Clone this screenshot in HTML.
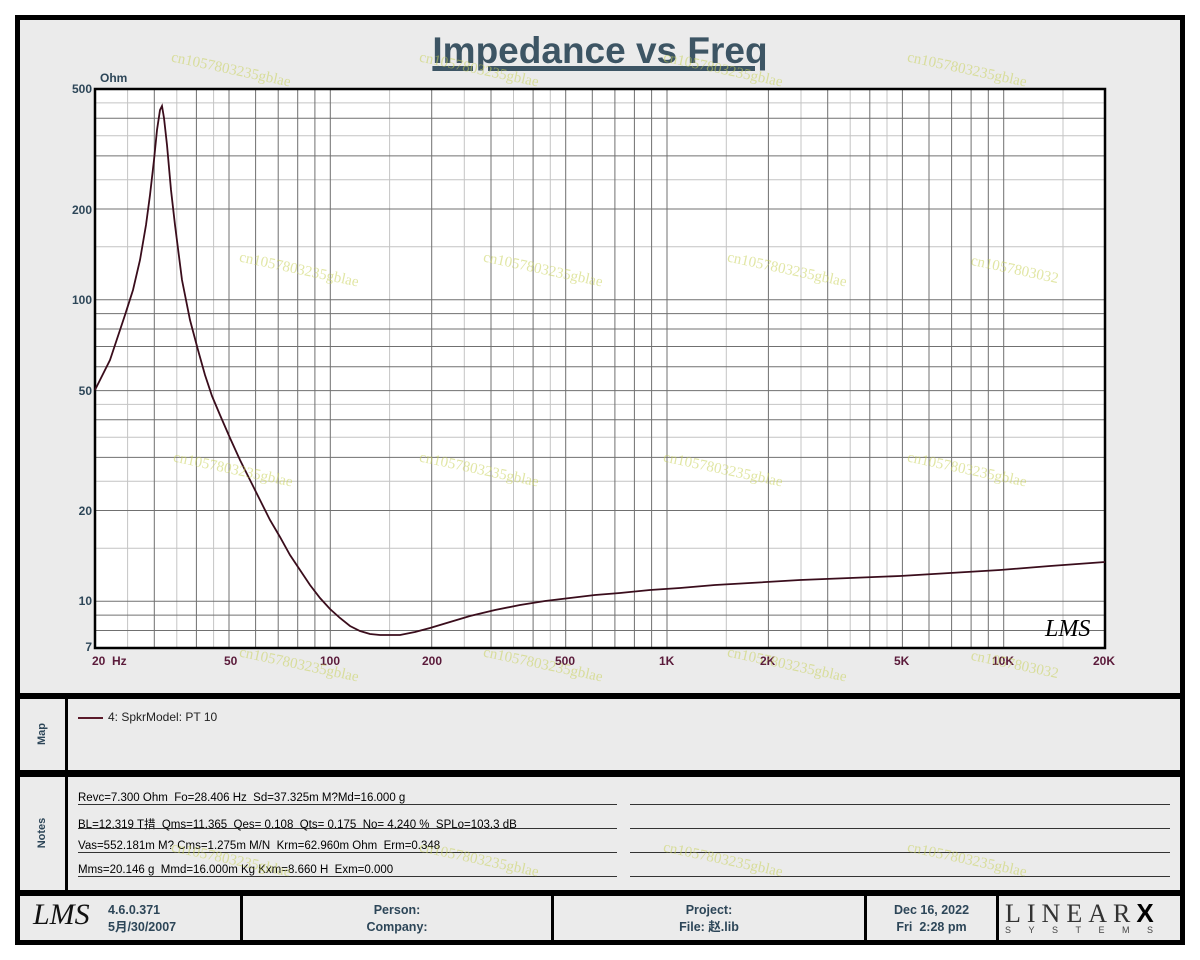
<!DOCTYPE html>
<html><head><meta charset="utf-8">
<style>
*{margin:0;padding:0;box-sizing:border-box}
body{width:1200px;height:960px;background:#fff;position:relative;overflow:hidden;font-family:"Liberation Sans","Noto Sans CJK SC",sans-serif}
.abs{position:absolute}
.frame{left:15px;top:15px;width:1170px;height:930px;background:#000}
.pnl{background:#ebebeb;position:absolute}
.title{left:0;width:1200px;top:30px;text-align:center;font-weight:bold;font-size:37px;color:#3d5564;text-decoration:underline;text-decoration-thickness:5px;text-underline-offset:3px}
.yl{font-weight:bold;font-size:12px;color:#2d4658;text-align:right;width:40px}
.xl{font-weight:bold;font-size:12px;color:#5a1a3a}
.vlab{font-weight:bold;font-size:11px;color:#2d4658;transform:rotate(-90deg);transform-origin:center;width:60px;text-align:center}
.note{font-size:11.5px;color:#000;left:78px}
.uline{height:1px;background:#333}
.ft{font-size:12.5px;font-weight:bold;color:#2d4658;text-align:center;line-height:17px}
.wm{font-family:"Liberation Serif",serif;font-size:15px;color:rgba(200,210,90,.55);transform:rotate(12deg);white-space:nowrap}
</style></head><body>
<div class="abs frame"></div>
<div class="pnl" style="left:20px;top:20px;width:1160px;height:673px"></div>
<div class="pnl" style="left:20px;top:699px;width:45px;height:71px"></div>
<div class="pnl" style="left:68px;top:699px;width:1112px;height:71px"></div>
<div class="pnl" style="left:20px;top:777px;width:45px;height:113px"></div>
<div class="pnl" style="left:68px;top:777px;width:1112px;height:113px"></div>
<div class="pnl" style="left:20px;top:896px;width:220px;height:44px"></div>
<div class="pnl" style="left:243px;top:896px;width:308px;height:44px"></div>
<div class="pnl" style="left:554px;top:896px;width:310px;height:44px"></div>
<div class="pnl" style="left:867px;top:896px;width:129px;height:44px"></div>
<div class="pnl" style="left:999px;top:896px;width:181px;height:44px"></div>

<div class="abs title">Impedance vs Freq</div>
<div class="abs" style="left:100px;top:71px;font-weight:bold;font-size:12px;color:#2d4658">Ohm</div>

<svg class="abs" style="left:0;top:0" width="1200" height="700" id="plot">
<rect x="95" y="89" width="1010" height="559" fill="#fff"/>
<g id="grid2" stroke="#c4c4c4" stroke-width="1"></g>
<g id="grid" stroke="#707070" stroke-width="1"></g>
<rect x="95" y="89" width="1010" height="559" fill="none" stroke="#000" stroke-width="2.5"/>
<polyline fill="none" stroke="#3a0d1c" stroke-width="1.8" points="95,390 110,360 125,315 133,290 140,260 146,225 150,195 154,160 157,130 160,110 162,106 164,118 167,145 171,190 175,225 182,280 190,320 198,350 205,375 212,396 220,415 230,438 240,460 250,480 260,500 270,520 280,537 290,555 300,570 310,585 320,598 330,609 340,618 350,626 360,631 370,634 380,635 390,635 400,635 415,632 430,628 450,622 470,616 495,610 520,605 545,601 570,598 595,595 620,593 650,590 680,588 715,585 750,583 800,580 850,578 900,576 950,573 1000,570 1050,566 1105,562"/>
<text x="1045" y="636" font-family="Liberation Serif,serif" font-style="italic" font-size="24" fill="#000">LMS</text>
</svg>
<script>
(function(){
var g=document.getElementById('grid'),g2=document.getElementById('grid2'),s='',s2='';
function X(f){return 95+Math.log10(f/20)*336.7}
function Y(v){return 648-Math.log10(v/7)*301.5}
for(var d=10;d<=10000;d*=10){
 for(var m=1;m<10;m++){var f=d*m;if(f>20&&f<20000){var x=X(f).toFixed(1);s+='<line x1="'+x+'" y1="89" x2="'+x+'" y2="648"/>';}}
 [1.5,2.5,3.5,4.5].forEach(function(m){var f=d*m;if(f>20&&f<20000){var x=X(f).toFixed(1);s2+='<line x1="'+x+'" y1="89" x2="'+x+'" y2="648"/>';}});
}
[8,9,10,20,30,40,50,60,70,80,90,100,200,300,400].forEach(function(v){var y=Y(v).toFixed(1);s+='<line x1="95" y1="'+y+'" x2="1105" y2="'+y+'"/>';});
[15,25,35,45,150,250,350,450].forEach(function(v){var y=Y(v).toFixed(1);s2+='<line x1="95" y1="'+y+'" x2="1105" y2="'+y+'"/>';});
g.innerHTML=s;g2.innerHTML=s2;
})();
</script>

<div class="abs yl" style="left:52px;top:82px">500</div>
<div class="abs yl" style="left:52px;top:203px">200</div>
<div class="abs yl" style="left:52px;top:293px">100</div>
<div class="abs yl" style="left:52px;top:384px">50</div>
<div class="abs yl" style="left:52px;top:504px">20</div>
<div class="abs yl" style="left:52px;top:594px">10</div>
<div class="abs yl" style="left:52px;top:640px">7</div>

<div class="abs xl" style="left:92px;top:654px">20&nbsp;&nbsp;Hz</div>
<div class="abs xl" style="left:224px;top:654px">50</div>
<div class="abs xl" style="left:320px;top:654px">100</div>
<div class="abs xl" style="left:422px;top:654px">200</div>
<div class="abs xl" style="left:555px;top:654px">500</div>
<div class="abs xl" style="left:659px;top:654px">1K</div>
<div class="abs xl" style="left:760px;top:654px">2K</div>
<div class="abs xl" style="left:894px;top:654px">5K</div>
<div class="abs xl" style="left:992px;top:654px">10K</div>
<div class="abs xl" style="left:1093px;top:654px">20K</div>

<div class="abs wm" style="left:170px;top:62px">cn1057803235gblae</div>
<div class="abs wm" style="left:418px;top:62px">cn1057803235gblae</div>
<div class="abs wm" style="left:662px;top:62px">cn1057803235gblae</div>
<div class="abs wm" style="left:906px;top:62px">cn1057803235gblae</div>
<div class="abs wm" style="left:238px;top:262px">cn1057803235gblae</div>
<div class="abs wm" style="left:482px;top:262px">cn1057803235gblae</div>
<div class="abs wm" style="left:726px;top:262px">cn1057803235gblae</div>
<div class="abs wm" style="left:970px;top:262px">cn1057803032</div>
<div class="abs wm" style="left:172px;top:462px">cn1057803235gblae</div>
<div class="abs wm" style="left:418px;top:462px">cn1057803235gblae</div>
<div class="abs wm" style="left:662px;top:462px">cn1057803235gblae</div>
<div class="abs wm" style="left:906px;top:462px">cn1057803235gblae</div>
<div class="abs wm" style="left:238px;top:657px">cn1057803235gblae</div>
<div class="abs wm" style="left:482px;top:657px">cn1057803235gblae</div>
<div class="abs wm" style="left:726px;top:657px">cn1057803235gblae</div>
<div class="abs wm" style="left:970px;top:657px">cn1057803032</div>

<div class="abs vlab" style="left:12px;top:728px">Map</div>
<div class="abs vlab" style="left:12px;top:827px">Notes</div>
<div class="abs" style="left:78px;top:717px;width:25px;height:2px;background:#5a1a2a"></div>
<div class="abs" style="left:108px;top:710px;font-size:12px;color:#222">4: SpkrModel: PT 10</div>

<div class="abs note" style="top:792px">Revc=7.300 Ohm&nbsp; Fo=28.406 Hz&nbsp; Sd=37.325m M?Md=16.000 g</div>
<div class="abs note" style="top:816px">BL=12.319 T措&nbsp; Qms=11.365&nbsp; Qes= 0.108&nbsp; Qts= 0.175&nbsp; No= 4.240 %&nbsp; SPLo=103.3 dB</div>
<div class="abs note" style="top:840px">Vas=552.181m M? Cms=1.275m M/N&nbsp; Krm=62.960m Ohm&nbsp; Erm=0.348</div>
<div class="abs note" style="top:864px">Mms=20.146 g&nbsp; Mmd=16.000m Kg Kxm=8.660 H&nbsp; Exm=0.000</div>
<div class="abs uline" style="left:78px;top:804px;width:539px"></div><div class="abs uline" style="left:630px;top:804px;width:540px"></div>
<div class="abs uline" style="left:78px;top:828px;width:539px"></div><div class="abs uline" style="left:630px;top:828px;width:540px"></div>
<div class="abs uline" style="left:78px;top:852px;width:539px"></div><div class="abs uline" style="left:630px;top:852px;width:540px"></div>
<div class="abs uline" style="left:78px;top:876px;width:539px"></div><div class="abs uline" style="left:630px;top:876px;width:540px"></div>
<div class="abs wm" style="left:170px;top:852px">cn1057803235gblae</div>
<div class="abs wm" style="left:418px;top:852px">cn1057803235gblae</div>
<div class="abs wm" style="left:662px;top:852px">cn1057803235gblae</div>
<div class="abs wm" style="left:906px;top:852px">cn1057803235gblae</div>

<div class="abs" style="left:33px;top:898px;font-family:'Liberation Serif',serif;font-style:italic;font-size:30px;color:#111">LMS</div>
<div class="abs ft" style="left:108px;top:902px;text-align:left">4.6.0.371<br>5月/30/2007</div>
<div class="abs ft" style="left:243px;top:902px;width:308px">Person:<br>Company:</div>
<div class="abs ft" style="left:554px;top:902px;width:310px">Project:<br>File: 赵.lib</div>
<div class="abs ft" style="left:867px;top:902px;width:129px">Dec 16, 2022<br>Fri&nbsp; 2:28 pm</div>
<div class="abs" style="left:1005px;top:898px;font-family:'Liberation Serif',serif;font-size:26px;letter-spacing:6px;color:#333">LINEAR<b style="font-family:'Liberation Sans',sans-serif;color:#000;letter-spacing:0">X</b></div>
<div class="abs" style="left:1005px;top:925px;font-size:9px;letter-spacing:17.5px;color:#444">SYSTEMS</div>
</body></html>
